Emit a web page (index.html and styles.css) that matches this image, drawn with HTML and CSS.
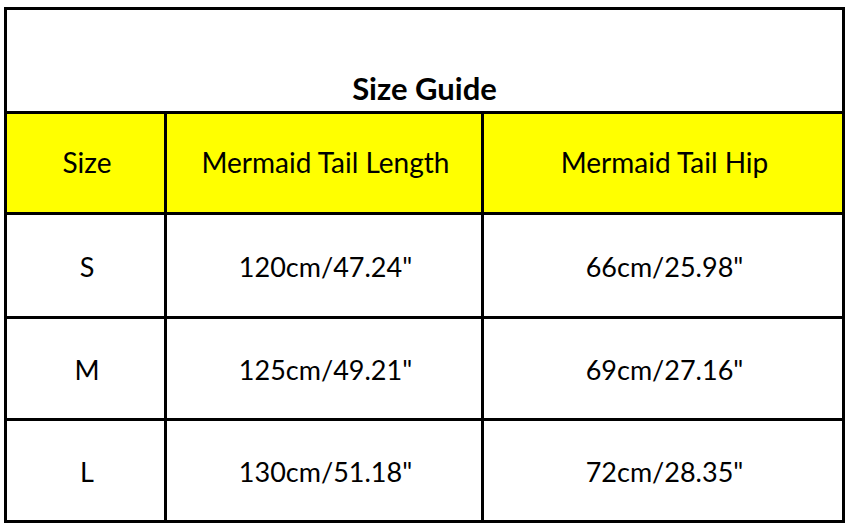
FILE: index.html
```html
<!DOCTYPE html>
<html>
<head>
<meta charset="utf-8">
<link rel="stylesheet" href="styles.css">
</head>
<body>
<div class="chart">
  <div class="title">Size Guide</div>
  <div class="cell head">Size</div>
  <div class="cell head">Mermaid Tail Length</div>
  <div class="cell head">Mermaid Tail Hip</div>
  <div class="cell">S</div>
  <div class="cell">120cm/47.24"</div>
  <div class="cell">66cm/25.98"</div>
  <div class="cell">M</div>
  <div class="cell">125cm/49.21"</div>
  <div class="cell">69cm/27.16"</div>
  <div class="cell">L</div>
  <div class="cell">130cm/51.18"</div>
  <div class="cell">72cm/28.35"</div>
</div>
</body>
</html>
```
FILE: styles.css
```css
html, body {
  margin: 0;
  padding: 0;
  background: #fff;
}
body {
  padding: 7px 0 0 4px;
  font-family: Lato, "Open Sans", sans-serif;
  color: #000;
}
.chart {
  width: 841px;
  height: 516px;
  box-sizing: border-box;
  background: #000;
  padding: 3px;
  display: grid;
  grid-template-columns: 157px 314px 358px;
  grid-template-rows: 101px 98px 101px 99px 99px;
  gap: 3px;
}
.title {
  grid-column: 1 / 4;
  background: #fff;
  display: flex;
  align-items: flex-end;
  justify-content: center;
  padding-bottom: 7px;
  font-weight: bold;
  font-size: 31px;
  line-height: 1;
}
.cell {
  background: #fff;
  display: flex;
  align-items: center;
  justify-content: center;
  font-size: 27px;
  padding-top: 1px;
  padding-left: 3px;
  box-sizing: border-box;
}
.cell.head {
  background: #ffff00;
  font-size: 28px;
  padding-top: 0;
  padding-bottom: 2px;
}
```
